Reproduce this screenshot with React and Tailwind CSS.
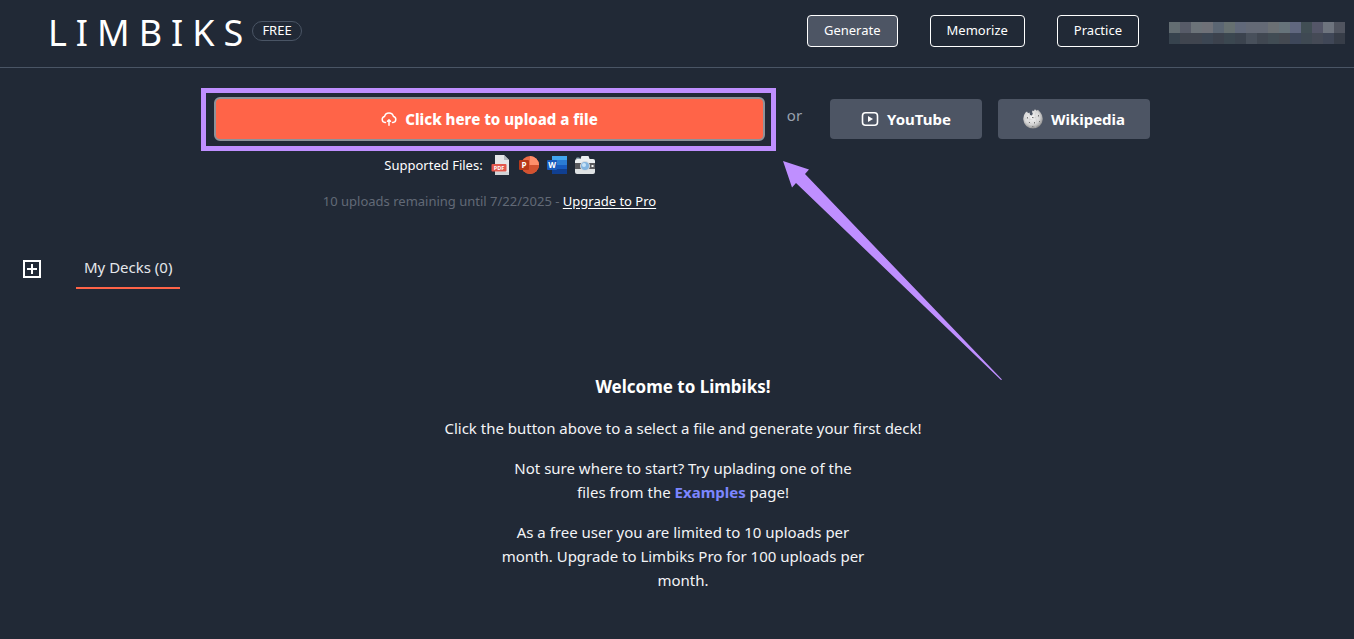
const navItems = [
  { label: 'Generate', active: true },
  { label: 'Memorize', active: false },
  { label: 'Practice', active: false }
]

const accountTiles = [
  '#636d72', '#575b68', '#6c7379', '#6f7178', '#5b6673', '#667071', '#61697a', '#646a76',
  '#646a76', '#6b7074', '#66737a', '#60677f', '#414e54', '#545668', '#6e747e', '#50545f',
  '#37434e', '#40454f', '#40454f', '#3c4653', '#3c424d', '#3b4750', '#3b434e', '#48505b',
  '#404751', '#414c54', '#444951', '#3e475a', '#3f4953', '#454a56', '#404757', '#373d48'
]

function UploadIcon() {
  return (
    <svg
      viewBox="0 0 16 16"
      className="size-4"
      fill="none"
      stroke="currentColor"
      strokeWidth="1.5"
      strokeLinecap="round"
      strokeLinejoin="round"
      aria-hidden="true"
    >
      <path d="M4.500 11.500H4A3 3 0 0 1 3.500 5.600A4.600 4.600 0 0 1 12.500 5.600A3 3 0 0 1 12 11.500H11.500" />
      <path d="M8 14.200V9M6.500 10.300L8 8.800L9.500 10.300" />
    </svg>
  )
}

function YouTubeIcon() {
  return (
    <svg viewBox="0 0 18 16" className="h-4 w-[18px]" aria-hidden="true">
      <rect x="1.500" y="1.800" width="15" height="12.400" rx="3" fill="none" stroke="currentColor" strokeWidth="1.600" />
      <path d="M7 5l5 3-5 3z" fill="currentColor" />
    </svg>
  )
}

function PdfIcon() {
  return (
    <svg viewBox="0 0 20 20" className="size-5" role="img" aria-label="PDF">
      <path d="M4 0h9l5 5v15H4z" fill="#e4e6e8" />
      <path d="M13 0l5 5h-5z" fill="#b4bac0" />
      <path d="M4 17h14v3H4z" fill="#d0d3d6" />
      <rect x="0.500" y="9" width="15" height="7.500" rx="1" fill="#e2574c" />
      <text x="8" y="14.800" fontSize="5.500" fontWeight="700" fill="#fff" textAnchor="middle" fontFamily="Open Sans">PDF</text>
    </svg>
  )
}

function PowerPointIcon() {
  return (
    <svg viewBox="0 0 20 20" className="size-5" role="img" aria-label="PowerPoint">
      <circle cx="11" cy="10" r="9" fill="#ed6c47" />
      <path d="M11 1a9 9 0 0 1 9 9h-9z" fill="#ff8f6b" />
      <path d="M2 10h18a9 9 0 0 1-18 0z" fill="#d35230" />
      <rect x="0" y="5" width="10" height="10" rx="1" fill="#b9391a" />
      <text x="5" y="13" fontSize="8" fontWeight="700" fill="#fff" textAnchor="middle" fontFamily="Open Sans">P</text>
    </svg>
  )
}

function WordIcon() {
  return (
    <svg viewBox="0 0 20 20" className="size-5" role="img" aria-label="Word">
      <path d="M5 1h15v5H5z" fill="#41a5ee" />
      <path d="M5 5h15v5H5z" fill="#2b7cd3" />
      <path d="M5 10h15v5H5z" fill="#185abd" />
      <path d="M5 14h15v5H5z" fill="#103f91" />
      <rect x="0" y="5" width="10" height="10" rx="1" fill="#185abd" />
      <text x="5" y="13" fontSize="8" fontWeight="700" fill="#fff" textAnchor="middle" fontFamily="Open Sans">W</text>
    </svg>
  )
}

function CameraIcon() {
  return (
    <svg viewBox="0 0 20 20" className="size-5" role="img" aria-label="Image">
      <path d="M5 5l1.500-4h7L15 5z" fill="#eceff1" />
      <path d="M1 4q0-1.500 1-1.500h2q1 0 1 1.500z" fill="#90a4ae" />
      <path d="M0 6q0-2 2-2h16q2 0 2 2v3H0z" fill="#eceff1" />
      <path d="M0 8h20v6H0z" fill="#5a5a5e" />
      <path d="M0 14h20v3q0 2-2 2H2q-2 0-2-2z" fill="#dfe2e4" />
      <circle cx="10" cy="11" r="5" fill="#d5dade" />
      <circle cx="10" cy="11" r="4" fill="#82b4e0" />
      <circle cx="9" cy="10" r="2" fill="#c8e3f8" />
      <rect x="16.500" y="10" width="2" height="2" fill="#f5f5f5" />
    </svg>
  )
}

function WikipediaIcon() {
  return (
    <svg viewBox="0 0 20 20" className="size-5" aria-hidden="true">
      <defs>
        <radialGradient id="globe" cx="0.45" cy="0.4" r="0.6">
          <stop offset="0" stopColor="#f6f6f6" />
          <stop offset="0.65" stopColor="#d8d8d8" />
          <stop offset="1" stopColor="#8b8b8b" />
        </radialGradient>
      </defs>
      <path
        d="M2.500 3.500L4 2.500l1 1.800 1.500-.8.500 2.500 2 .5.800-2L9 3l.5-1.500L11 2l.5-1.500 1.500.3.500 1L15 .800 17.500 3.500A9.800 9.800 0 1 1 2.500 3.500z"
        fill="url(#globe)"
      />
      <path
        d="M1 10q3-2 5 0t5-1 8 0M3 15q3-2 6 0t8 0M6 6q2 3 0 6t2 7M13 3q-2 4 0 7t-1 9"
        fill="none"
        stroke="#c4c4c4"
        strokeWidth="0.4"
      />
      <path
        d="M4 8h1v1.500H4zM9 8h1.500v1H9zM15 6h1v1.500h-1zM6 13h1v1H6zM11 13h1v1.500h-1zM16 12h1v1h-1zM9 17h1.500v.8H9z"
        fill="#777"
      />
    </svg>
  )
}

function AddIcon() {
  return (
    <svg viewBox="0 0 18 18" className="size-[18px]" fill="none" stroke="currentColor" strokeWidth="2" aria-hidden="true">
      <path d="M1 1h16v16H1zM9 4v10M4 9h10" />
    </svg>
  )
}

function Header() {
  return (
    <header className="flex h-[68px] items-start justify-between border-b border-gray-600 pr-[9px] pl-12">
      <div className="flex items-center">
        <a href="#" className="text-4xl leading-[66px] tracking-[0.25em]">LIMBIKS</a>
        <span className="mb-1 flex h-5 items-center rounded-full border border-gray-600 px-[9px] text-[13px]">
          FREE
        </span>
      </div>
      <div className="flex items-start">
        <nav className="mt-[15px] flex gap-8">
          {navItems.map(item => (
            <button
              key={item.label}
              className={`h-8 rounded border border-white px-4 text-[13px] ${item.active ? 'bg-[#4d5564]' : ''}`}
            >
              {item.label}
            </button>
          ))}
        </nav>
        <div className="mt-[22px] ml-[30px] grid grid-cols-16">
          {accountTiles.map((color, i) => (
            <div key={i} className="size-[11px]" style={{ backgroundColor: color }} />
          ))}
        </div>
      </div>
    </header>
  )
}

function UploadCallout() {
  return (
    <>
      <div className="pointer-events-none absolute -top-[9px] -right-[11px] -bottom-[10px] -left-[13px] border-[5px] border-[#bf8fff]" />
      <svg
        viewBox="783 161 220 220"
        className="pointer-events-none absolute top-16 left-full ml-[18px] h-[220px] w-[220px]"
        aria-hidden="true"
      >
        <path d="M783 161L809 169.500L805 174L1002 379.500L1001 380L796 183L792 187.500z" fill="#bf8fff" />
      </svg>
    </>
  )
}

function UploadPanel() {
  return (
    <section className="mx-auto flex w-full max-w-[936px] items-start">
      <div className="flex-1 text-center">
        <div className="relative">
          <button className="flex h-11 w-full items-center justify-center gap-2 rounded-md border-2 border-[#8e9299] bg-[#ff6448] text-[15px] font-extrabold">
            <UploadIcon />
            Click here to upload a file
          </button>
          <UploadCallout />
        </div>
        <div className="mt-3 flex items-center justify-center gap-2 text-[13px] leading-6">
          <span>Supported Files:</span>
          <PdfIcon />
          <PowerPointIcon />
          <WordIcon />
          <CameraIcon />
        </div>
        <p className="mt-3 text-[13px] leading-6 text-[#626976]">
          10 uploads remaining until 7/22/2025 -{' '}
          <a href="#" className="text-white underline underline-offset-2">Upgrade to Pro</a>
        </p>
      </div>
      <span className="mt-1.5 w-[65px] pr-1.5 text-center text-[15px] leading-6 text-gray-400">or</span>
      <div className="mt-0.5 flex gap-4">
        <button className="flex h-10 w-[152px] items-center justify-center gap-2 rounded bg-[#4d5564] text-[15px] font-bold">
          <YouTubeIcon />
          YouTube
        </button>
        <button className="flex h-10 w-[152px] items-center justify-center gap-2 rounded bg-[#4d5564] text-[15px] font-bold">
          <WikipediaIcon />
          Wikipedia
        </button>
      </div>
    </section>
  )
}

function Welcome() {
  return (
    <section className="flex flex-col items-center gap-4 text-center text-[15px] leading-6 text-gray-100">
      <h1 className="text-[17px] leading-[26px] font-bold text-white">Welcome to Limbiks!</h1>
      <p>Click the button above to a select a file and generate your first deck!</p>
      <p className="max-w-[368px]">
        Not sure where to start? Try uplading one of the files from the{' '}
        <a href="#" className="font-bold text-indigo-400">Examples</a> page!
      </p>
      <p className="max-w-[368px]">
        As a free user you are limited to 10 uploads per month. Upgrade to Limbiks Pro for 100 uploads per month.
      </p>
    </section>
  )
}

export default function App() {
  return (
    <div className="min-h-screen bg-[#212936] font-['Noto_Sans','Open_Sans',sans-serif] text-white">
      <Header />
      <main className="pt-[29px]">
        <div className="pl-2.5">
          <UploadPanel />
        </div>
        <div className="mt-[35px] flex items-center pl-[23px]">
          <button aria-label="New folder" className="mr-[35px]">
            <AddIcon />
          </button>
          <button className="h-[41px] border-b-2 border-[#ff6448] px-2 pb-0.5 text-[15px] leading-6 text-gray-200">
            My Decks (0)
          </button>
        </div>
        <div className="mt-[85px] pl-3">
          <Welcome />
        </div>
      </main>
    </div>
  )
}
